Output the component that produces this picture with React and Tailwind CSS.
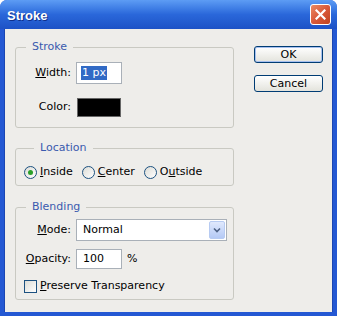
export default function App() {
  const font = { fontFamily: '"DejaVu Sans", "Liberation Sans", sans-serif' };

  return (
    <div className="w-[337px] h-[316px] flex flex-col rounded-t-[7px] bg-[#2458d3] overflow-hidden text-[11px] text-black" style={font}>
      {/* title bar */}
      <div className="h-[29px] shrink-0 flex items-center justify-between pl-[7px] pr-[6px] bg-gradient-to-b from-[#5d9cf4] via-[#2a67da] to-[#1d52c6]">
        <span className="text-white font-bold text-[13px] leading-none pt-[1px]" style={{ fontFamily: '"Liberation Sans", Arial, sans-serif', textShadow: '1px 1px 0 #0f2f8a' }}>
          Stroke
        </span>
        <button className="w-[21px] h-[21px] rounded-[3px] border border-white flex items-center justify-center bg-gradient-to-br from-[#eb8a63] via-[#d9593a] to-[#c0421d]">
          <svg width="11" height="11" viewBox="0 0 11 11">
            <path d="M1.5 1.5 L9.5 9.5 M9.5 1.5 L1.5 9.5" stroke="white" strokeWidth="2.2" strokeLinecap="square" />
          </svg>
        </button>
      </div>

      {/* body */}
      <div className="flex-1 mx-[4px] mb-[4px] bg-[#eeedea] flex pl-[10px] pt-[11px] border-x border-[#1b46b3]">
        <div className="w-[219px] flex flex-col">
          <fieldset className="border border-[#c9c9c2] rounded-[3px] px-0 pt-[8px] pb-[10px]">
            <legend className="ml-[10px] px-[6px] leading-[14px] text-[#3a5aae]">Stroke</legend>
            <div className="flex flex-col gap-[14px]">
              <div className="flex items-center h-[22px]">
                <span className="w-[55px] text-right">
                  <span className="underline">W</span>idth:
                </span>
                <div className="ml-[5px] w-[46px] h-[22px] bg-white border border-[#a9b0b8] flex items-center pl-[4px]">
                  <span className="bg-[#316ac5] text-white leading-[14px] px-[1px]">1 px</span>
                </div>
              </div>
              <div className="flex items-center h-[19px]">
                <span className="w-[55px] text-right">Color:</span>
                <div className="ml-[6px] w-[44px] h-[19px] bg-black border border-[#666]" />
              </div>
            </div>
          </fieldset>

          <fieldset className="mt-[13px] border border-[#c9c9c2] rounded-[3px] pt-[11px] pb-[6px] pl-[8px]">
            <legend className="ml-[10px] px-[6px] leading-[14px] text-[#3a5aae]">Location</legend>
            <div className="flex items-center h-[13px]">
              <div className="w-[13px] h-[13px] rounded-full border border-[#1c5180] bg-gradient-to-br from-[#dcdcd6] to-white flex items-center justify-center">
                <div className="w-[5px] h-[5px] rounded-full bg-[#2aa02a]" />
              </div>
              <span className="ml-[3px]"><span className="underline">I</span>nside</span>
              <div className="ml-[9px] w-[13px] h-[13px] rounded-full border border-[#1c5180] bg-gradient-to-br from-[#dcdcd6] to-white" />
              <span className="ml-[3px]"><span className="underline">C</span>enter</span>
              <div className="ml-[9px] w-[13px] h-[13px] rounded-full border border-[#1c5180] bg-gradient-to-br from-[#dcdcd6] to-white" />
              <span className="ml-[3px]">O<span className="underline">u</span>tside</span>
            </div>
          </fieldset>

          <fieldset className="mt-[14px] border border-[#c9c9c2] rounded-[3px] pt-[5px] pb-[6px]">
            <legend className="ml-[10px] px-[6px] leading-[14px] text-[#3a5aae]">Blending</legend>
            <div className="flex items-center h-[22px]">
              <span className="w-[55px] text-right">
                <span className="underline">M</span>ode:
              </span>
              <div className="ml-[5px] w-[151px] h-[22px] bg-white border border-[#a9b0b8] flex items-center justify-between pl-[6px] pr-[1px]">
                <span>Normal</span>
                <div className="w-[16px] h-[18px] rounded-[2px] border border-[#b7cbf2] bg-gradient-to-b from-[#e0e9fd] to-[#b4c9f5] flex items-center justify-center">
                  <svg width="8" height="6" viewBox="0 0 8 6">
                    <path d="M1 1.5 L4 4.5 L7 1.5" fill="none" stroke="#4d6185" strokeWidth="1.6" />
                  </svg>
                </div>
              </div>
            </div>
            <div className="mt-[8px] flex items-center h-[20px]">
              <span className="w-[55px] text-right">
                <span className="underline">O</span>pacity:
              </span>
              <div className="ml-[5px] w-[46px] h-[20px] bg-white border border-[#a9b0b8] flex items-center pl-[6px]">100</div>
              <span className="ml-[5px]">%</span>
            </div>
            <div className="mt-[11px] flex items-center h-[13px] pl-[8px]">
              <div className="w-[13px] h-[13px] border border-[#1c5180] bg-gradient-to-br from-[#dcdcd6] to-white" />
              <span className="ml-[3px]"><span className="underline">P</span>reserve Transparency</span>
            </div>
          </fieldset>
        </div>

        <div className="ml-[20px] mt-[6px] flex flex-col gap-[12px]">
          <button className="w-[69px] h-[17px] rounded-[3px] border border-[#003c74] bg-gradient-to-b from-white to-[#e3e3dc] flex items-center justify-center leading-none shadow-[inset_0_0_0_1px_#a7c0ef]">
            OK
          </button>
          <button className="w-[69px] h-[17px] rounded-[3px] border border-[#003c74] bg-gradient-to-b from-white to-[#e3e3dc] flex items-center justify-center leading-none">
            Cancel
          </button>
        </div>
      </div>
    </div>
  );
}
